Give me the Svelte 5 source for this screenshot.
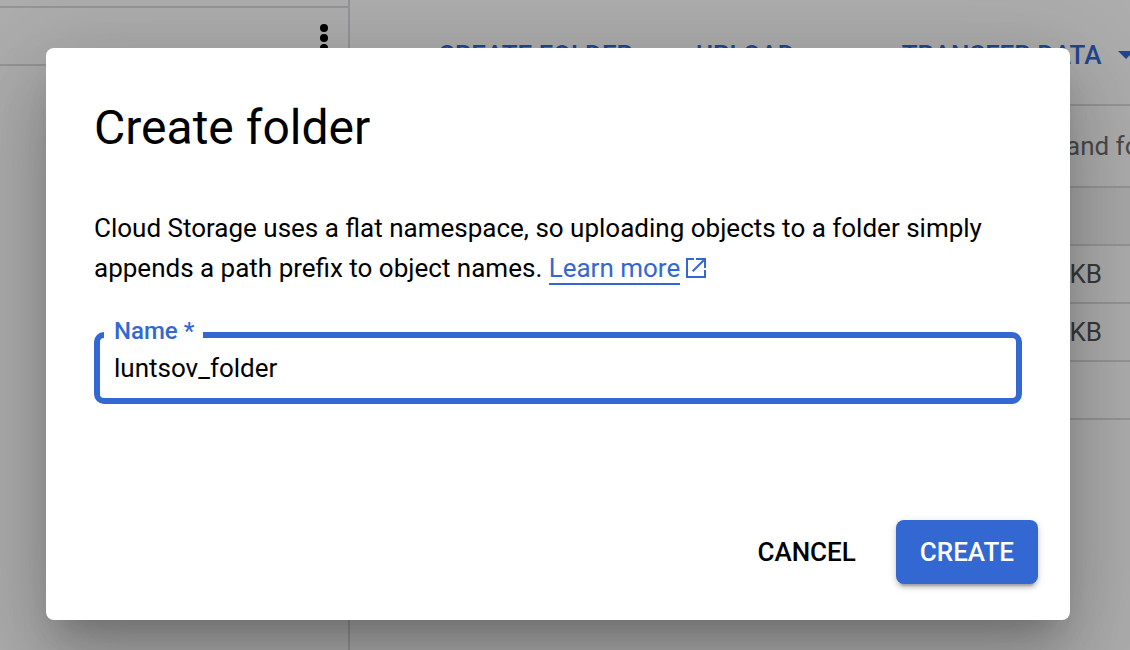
<script>
  let name = $state('luntsov_folder');
  const rows = ['KB', 'KB', ''];
</script>

<div class="page">
  <div class="console">
    <aside class="sidebar">
      <div class="strip"></div>
      <div class="side-head">
        <button class="more" aria-label="More options">
          <svg width="8" height="28" viewBox="0 0 8 28" fill="currentColor" aria-hidden="true">
            <circle cx="4" cy="4" r="4" />
            <circle cx="4" cy="14" r="4" />
            <circle cx="4" cy="24" r="4" />
          </svg>
        </button>
      </div>
    </aside>
    <main class="content">
      <div class="toolbar">
        <button class="action create-folder">CREATE FOLDER</button>
        <button class="action upload">UPLOAD
          <svg width="16" height="8" viewBox="0 0 16 8" fill="currentColor" aria-hidden="true"><path d="M0 0h16L8 8z" /></svg>
        </button>
        <button class="action">TRANSFER DATA
          <svg width="16" height="8" viewBox="0 0 16 8" fill="currentColor" aria-hidden="true"><path d="M0 0h16L8 8z" /></svg>
        </button>
      </div>
      <div class="filter"><span>and folders</span></div>
      <table>
        <thead><tr><th aria-label="Size"></th></tr></thead>
        <tbody>
          {#each rows as size}
            <tr><td>{size}</td></tr>
          {/each}
        </tbody>
      </table>
    </main>
  </div>

  <div class="backdrop">
    <div class="dialog" role="dialog" aria-modal="true" aria-labelledby="dialog-title">
      <h1 id="dialog-title">Create folder</h1>
      <p>
        Cloud Storage uses a flat namespace, so uploading objects to a folder simply appends a path prefix to object names.
        <a href="#learn"><span>Learn more</span><svg width="22" height="22" viewBox="0 0 22 22" fill="none" stroke="currentColor" stroke-width="2" aria-hidden="true"><path d="M8 2H1v18h18v-7M10 2h9v9M19 2L6.7 14.3" /></svg></a>
      </p>
      <div class="field">
        <label for="folder-name">Name *</label>
        <input id="folder-name" type="text" bind:value={name} />
      </div>
      <div class="actions">
        <button class="cancel">CANCEL</button>
        <button class="create">CREATE</button>
      </div>
    </div>
  </div>
</div>

<style>
  :global(body) {
    margin: 0;
    overflow: hidden;
  }
  .page {
    position: relative;
    min-height: 100vh;
    overflow: hidden;
    font-family: Roboto, sans-serif;
    font-size: 26px;
    color: #000;
    background: #fff;
  }
  .page * {
    box-sizing: border-box;
  }
  button {
    font: inherit;
    font-weight: 500;
    border: 0;
    padding: 0;
    background: none;
    cursor: pointer;
    white-space: nowrap;
  }
  .console {
    display: grid;
    grid-template-columns: 350px 1fr;
    height: 100vh;
    overflow: hidden;
  }
  .sidebar {
    border-right: 2px solid #dadce0;
  }
  .strip {
    height: 8px;
    border-bottom: 2px solid #dadce0;
  }
  .side-head {
    display: flex;
    justify-content: flex-end;
    align-items: center;
    height: 58px;
    padding: 4px 20px 0 0;
    border-bottom: 2px solid #dadce0;
  }
  .more {
    display: flex;
    color: #000;
  }
  .content {
    min-width: 0;
    overflow: hidden;
  }
  .toolbar {
    display: flex;
    align-items: center;
    height: 106px;
    padding: 6px 0 0 88px;
    border-bottom: 2px solid #dadce0;
  }
  .action {
    display: flex;
    align-items: center;
    gap: 17px;
    height: 32px;
    color: #3367d2;
  }
  .create-folder {
    margin-right: 63px;
  }
  .upload {
    margin-right: 74px;
  }
  .filter {
    display: flex;
    align-items: center;
    height: 82px;
    padding-left: 716px;
    border-bottom: 2px solid #dadce0;
    color: #6e6e6e;
    white-space: nowrap;
  }
  table {
    width: 100%;
    border-collapse: separate;
    border-spacing: 0;
  }
  th,
  td {
    height: 58px;
    padding: 0 28px 0 0;
    border-bottom: 2px solid #dadce0;
    text-align: right;
    color: #555;
  }
  th {
    background: #f8f8f8;
  }
  .backdrop {
    position: absolute;
    inset: 0;
    padding: 48px 60px 30px 46px;
    background: rgba(0, 0, 0, 0.32);
  }
  .dialog {
    display: flex;
    flex-direction: column;
    height: 100%;
    padding: 48px 32px 36px 48px;
    border-radius: 8px;
    background: #fff;
    box-shadow:
      0 22px 30px -14px rgba(0, 0, 0, 0.2),
      0 48px 76px 6px rgba(0, 0, 0, 0.14),
      0 18px 92px 16px rgba(0, 0, 0, 0.12);
  }
  h1 {
    margin: 0;
    font-size: 48px;
    line-height: 64px;
    font-weight: 400;
  }
  p {
    margin: 48px 16px 0 0;
    line-height: 40px;
  }
  a {
    color: #3367d2;
    text-decoration: none;
    white-space: nowrap;
  }
  a span {
    border-bottom: 2px solid #3367d2;
  }
  a svg {
    margin-left: 6px;
    vertical-align: -2px;
  }
  .field {
    position: relative;
    margin: 44px 16px 0 0;
  }
  label {
    position: absolute;
    top: -14px;
    left: 10px;
    padding: 0 9px 0 10px;
    font-size: 24px;
    line-height: 26px;
    font-weight: 500;
    color: #3367d2;
    background: #fff;
  }
  input {
    display: block;
    width: 100%;
    height: 72px;
    padding: 0 14px;
    border: 6px solid #3367d2;
    border-radius: 10px;
    outline: 0;
    font: inherit;
    color: #000;
    background: #fff;
  }
  .actions {
    display: flex;
    justify-content: flex-end;
    gap: 16px;
    margin-top: auto;
  }
  .actions button {
    height: 64px;
    padding: 0 24px;
    border-radius: 8px;
  }
  .create {
    color: #fff;
    background: #3367d2;
    box-shadow:
      0 6px 2px -4px rgba(0, 0, 0, 0.2),
      0 4px 4px 0 rgba(0, 0, 0, 0.14),
      0 2px 10px 0 rgba(0, 0, 0, 0.12);
  }
</style>
